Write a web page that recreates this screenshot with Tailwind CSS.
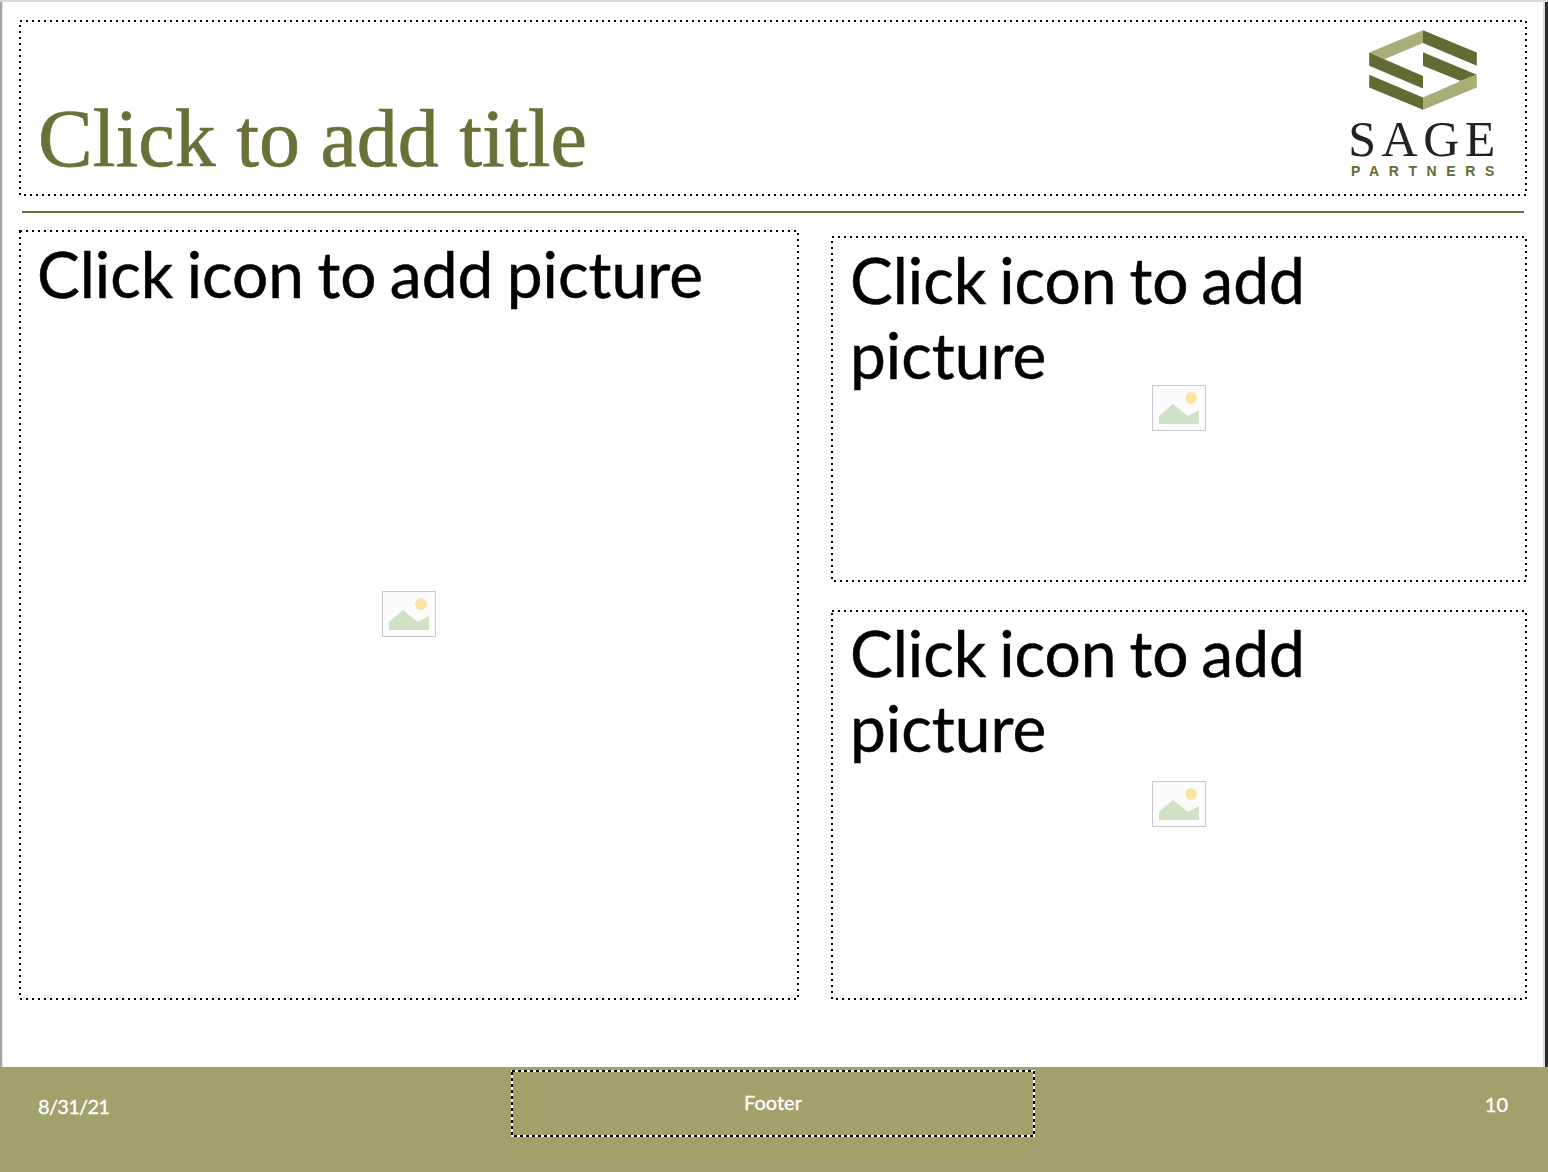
<!DOCTYPE html>
<html lang="en">
<head>
  <meta charset="UTF-8" />
  <title>Sage Partners slide layout</title>
  <script src="https://cdn.jsdelivr.net/npm/@tailwindcss/browser@4"></script>
</head>
<body class="bg-white">

  <div class="relative w-[1548px] h-[1172px] overflow-hidden flex flex-col bg-white font-['Lato',sans-serif] border-t-2 border-t-[#d9d9d9]">
    <!-- window edges -->
    <div class="absolute left-0 top-0 bottom-0 w-[2px] bg-[#a6a6a6]"></div>
    <div class="absolute left-[2px] top-0 bottom-0 w-[1px] bg-[#e4e4e4]"></div>
    <div class="absolute left-[1543px] top-0 bottom-0 w-[2px] bg-[#d9d9d9]"></div>
    <div class="absolute left-[1545px] top-0 bottom-0 w-[3px] bg-[#2b2b2b]"></div>

    <main class="flex-1 flex flex-col pl-[19px] pr-[21px] pt-[18px]">
      <!-- title -->
      <section class="relative h-[176px] flex items-end justify-between pl-[19px] pr-[30px]">
        <svg class="absolute inset-0" width="1508" height="176"><rect x="1" y="1" width="1506" height="174" fill="none" stroke="#000" stroke-width="2" stroke-dasharray="2 4"/></svg>
        <h1 class="font-['Liberation_Serif',serif] text-[82px] leading-none text-[#6b7038] pb-[16px] [-webkit-text-stroke:0.7px_#6b7038]">Click to add title</h1>
        <div class="flex flex-col items-center w-[150px] pb-[18px]">
          <svg class="ml-[2px]" width="108" height="80" viewBox="148 91 320 238">
            <polygon points="148,158 308,92 308,130 193,178" fill="#a9ad78"/>
            <polygon points="308,92 468,158 468,197 308,130" fill="#636b33"/>
            <polygon points="148,158 193,178 308,228 308,265 148,197" fill="#636b33"/>
            <polygon points="308,157 468,224 420,243 308,197" fill="#636b33"/>
            <polygon points="148,224 308,292 308,328 148,262" fill="#636b33"/>
            <polygon points="308,292 420,243 468,223 468,262 308,328" fill="#a9ad78"/>
          </svg>
          <span class="font-['Liberation_Serif',serif] text-[50px] leading-[50px] mt-[4px] tracking-[5.5px] text-[#222] pl-[5px]">SAGE</span>
          <span class="font-['Liberation_Sans',sans-serif] font-bold text-[14px] leading-[14px] tracking-[9.6px] text-[#636b33] pl-[11px]">PARTNERS</span>
        </div>
      </section>

      <hr class="ml-[3px] mr-[3px] mt-[15px] border-0 h-[2px] bg-[#6b7038]" />

      <div class="flex justify-between mt-[17px]">
        <!-- big picture placeholder -->
        <section class="relative w-[780px] h-[770px] pl-[18px] pt-[6px] text-[64px] leading-[75px] [word-spacing:-3px] [-webkit-text-stroke:0.5px_#000] text-black">
          <svg class="absolute inset-0" width="780" height="770"><rect x="1" y="1" width="778" height="768" fill="none" stroke="#000" stroke-width="2" stroke-dasharray="2 4"/></svg>
          Click icon to add picture
          <div class="absolute inset-0 flex items-center justify-center pb-[2px]">
            <svg width="54" height="46"><rect x=".5" y=".5" width="53" height="45" fill="#fcfcfc" stroke="#c9c9c9"/><circle cx="39" cy="13" r="6" fill="#fbe3a3"/><polygon points="7,39 7,31 21,19 36,31 47,25 47,39" fill="#cfe2c6"/></svg>
          </div>
        </section>

        <div class="flex flex-col w-[696px] pt-[6px]">
          <section class="relative h-[346px] pl-[19px] pr-[100px] pt-[6px] text-[64px] leading-[75px] [word-spacing:-3.5px] [-webkit-text-stroke:0.5px_#000] text-black">
            <svg class="absolute inset-0" width="696" height="346"><rect x="1" y="1" width="694" height="344" fill="none" stroke="#000" stroke-width="2" stroke-dasharray="2 4"/></svg>
            Click icon to add picture
            <div class="absolute inset-0 flex items-center justify-center pb-[2px]">
              <svg width="54" height="46"><rect x=".5" y=".5" width="53" height="45" fill="#fcfcfc" stroke="#c9c9c9"/><circle cx="39" cy="13" r="6" fill="#fbe3a3"/><polygon points="7,39 7,31 21,19 36,31 47,25 47,39" fill="#cfe2c6"/></svg>
            </div>
          </section>
          <section class="relative h-[390px] mt-[28px] pl-[19px] pr-[100px] pt-[5px] text-[64px] leading-[75px] [word-spacing:-3.5px] [-webkit-text-stroke:0.5px_#000] text-black">
            <svg class="absolute inset-0" width="696" height="390"><rect x="1" y="1" width="694" height="388" fill="none" stroke="#000" stroke-width="2" stroke-dasharray="2 4"/></svg>
            Click icon to add picture
            <div class="absolute inset-0 flex items-center justify-center pb-[2px]">
              <svg width="54" height="46"><rect x=".5" y=".5" width="53" height="45" fill="#fcfcfc" stroke="#c9c9c9"/><circle cx="39" cy="13" r="6" fill="#fbe3a3"/><polygon points="7,39 7,31 21,19 36,31 47,25 47,39" fill="#cfe2c6"/></svg>
            </div>
          </section>
        </div>
      </div>
    </main>

    <!-- footer band -->
    <footer class="relative z-10 h-[105px] bg-[#a2a16c] text-white text-[20px] [-webkit-text-stroke:0.3px_#fff] flex items-start pt-[3px] pl-[38px] pr-[40px]">
      <span class="w-[473px] mt-[24px] leading-[24px] tracking-[-0.7px]">8/31/21</span>
      <div class="relative w-[524px] h-[67px] flex justify-center pt-[20px]">
        <svg class="absolute inset-0" width="524" height="67"><rect x="1" y="1" width="522" height="65" fill="none" stroke="#fff" stroke-width="2"/><rect x="1" y="1" width="522" height="65" fill="none" stroke="#000" stroke-width="2" stroke-dasharray="3 3"/></svg>
        <span class="leading-[24px]">Footer</span>
      </div>
      <span class="ml-auto mt-[22px] leading-[24px]">10</span>
    </footer>
  </div>

</body>
</html>
